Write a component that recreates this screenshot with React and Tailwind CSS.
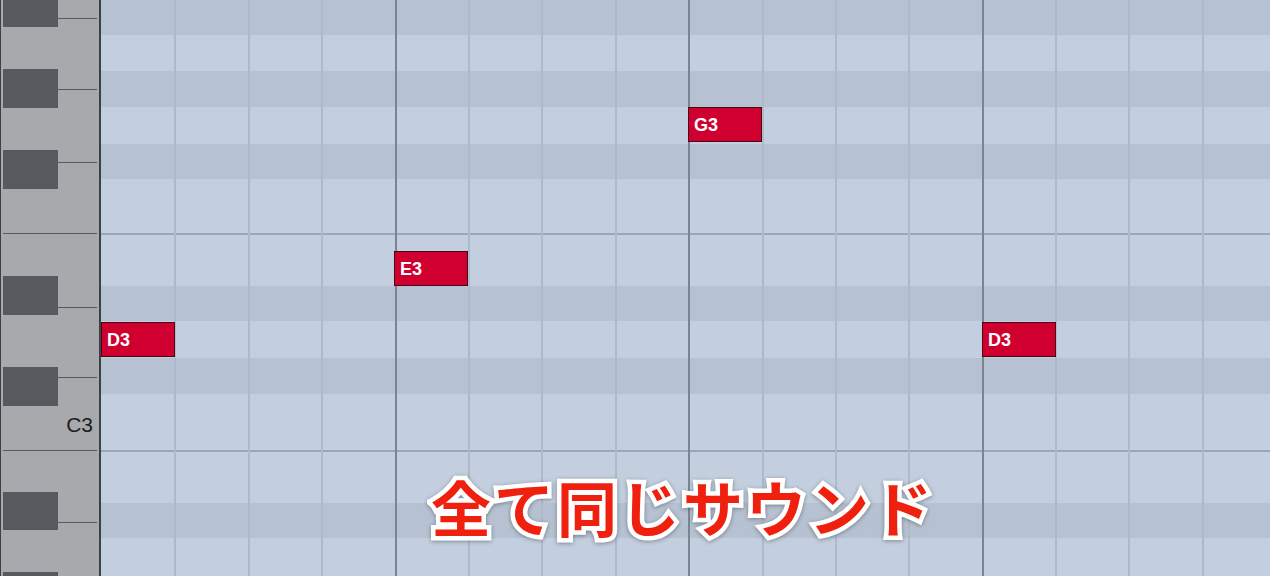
import React from "react";

// Piano keyboard strip, drawn top to bottom (first key is partly above the view)
const KEYS = [
  { kind: "black", h: 39, line: 30 },
  { kind: "gap", h: 42 },
  { kind: "black", h: 39, line: 20 },
  { kind: "gap", h: 42 },
  { kind: "black", h: 39, line: 12 },
  { kind: "gap", h: 44 },
  { kind: "line" },
  { kind: "gap", h: 42 },
  { kind: "black", h: 39, line: 31 },
  { kind: "gap", h: 52 },
  { kind: "black", h: 39, line: 10 },
  { kind: "gap", h: 44, label: "C3" },
  { kind: "line" },
  { kind: "gap", h: 41 },
  { kind: "black", h: 38, line: 30 },
  { kind: "gap", h: 42 },
  { kind: "black", h: 39, line: 20 },
];

// Grid rows: white-key rows are light, black-key rows darker
const ROWS = [
  { h: 35, dark: true },
  { h: 36 },
  { h: 36, dark: true },
  { h: 37 },
  { h: 35, dark: true },
  { h: 54 },
  { h: 53, octave: true },
  { h: 35, dark: true },
  { h: 37 },
  { h: 36, dark: true },
  { h: 56 },
  { h: 53, octave: true },
  { h: 35, dark: true },
  { h: 38 },
];

const NOTES = [
  { name: "D3", left: 0, top: 322 },
  { name: "E3", left: 293, top: 251 },
  { name: "G3", left: 587, top: 107 },
  { name: "D3", left: 881, top: 322 },
];

function Keyboard() {
  return (
    <div className="flex h-full w-[101px] shrink-0 flex-col overflow-hidden border-l border-r-2 border-[#3d4045] bg-[#a8a9ad]">
      <div className="-mt-[12px] flex flex-col">
        {KEYS.map((k, i) => {
          if (k.kind === "line") {
            return <div key={i} className="mx-[2px] h-px bg-[#55585c]" />;
          }
          if (k.kind === "black") {
            return (
              <div key={i} className="flex" style={{ height: k.h }}>
                <div className="ml-[2px] w-[55px] bg-[#56595d]" />
                <div className="mr-[2px] flex flex-1 flex-col">
                  <div style={{ height: k.line }} />
                  <div className="h-px bg-[#55585c]" />
                </div>
              </div>
            );
          }
          return (
            <div key={i} className="flex justify-end" style={{ height: k.h }}>
              {k.label && (
                <span className="pr-[6px] pt-[8px] text-[21px] leading-[21px] text-[#1c1c1c]">
                  {k.label}
                </span>
              )}
            </div>
          );
        })}
      </div>
    </div>
  );
}

function Note({ name, left, top }) {
  return (
    <div
      className="absolute flex h-[35px] w-[74px] items-center border border-[#4d0512] bg-[#cf0030] pl-[5px] text-[18px] font-bold leading-none text-white"
      style={{ left, top }}
    >
      {name}
    </div>
  );
}

function Grid() {
  return (
    <div className="relative h-full flex-1 overflow-hidden">
      {ROWS.map((r, i) => (
        <div
          key={i}
          className={
            (r.dark ? "bg-[#b6c2d2]" : "bg-[#c3cfdf]") +
            (r.octave ? " border-t-2 border-[#9aa7b8]" : "")
          }
          style={{ height: r.h }}
        />
      ))}

      {/* beat and bar lines */}
      <div className="absolute inset-0 flex">
        {Array.from({ length: 16 }).map((_, i) => (
          <div
            key={i}
            className={
              "h-full w-[73.4px] shrink-0 " +
              (i === 0
                ? ""
                : i % 4 === 0
                ? "border-l-2 border-[#7a8594]"
                : "border-l-2 border-[#adbacb]")
            }
          />
        ))}
      </div>

      {NOTES.map((n, i) => (
        <Note key={i} {...n} />
      ))}
    </div>
  );
}

export default function App() {
  return (
    <div className="relative flex h-[576px] w-[1270px] overflow-hidden font-['Liberation_Sans',Arial,sans-serif]">
      <Keyboard />
      <Grid />
      <div className="absolute left-[431px] top-[476px] text-[60px] font-bold leading-[60px] tracking-[3px] text-[#f0200f] font-['Noto_Sans_CJK_JP',sans-serif] [-webkit-text-stroke:9px_#ffffff] [paint-order:stroke_fill] drop-shadow-[0_1px_2px_rgba(0,0,0,0.35)]">
        全て同じサウンド
      </div>
    </div>
  );
}
